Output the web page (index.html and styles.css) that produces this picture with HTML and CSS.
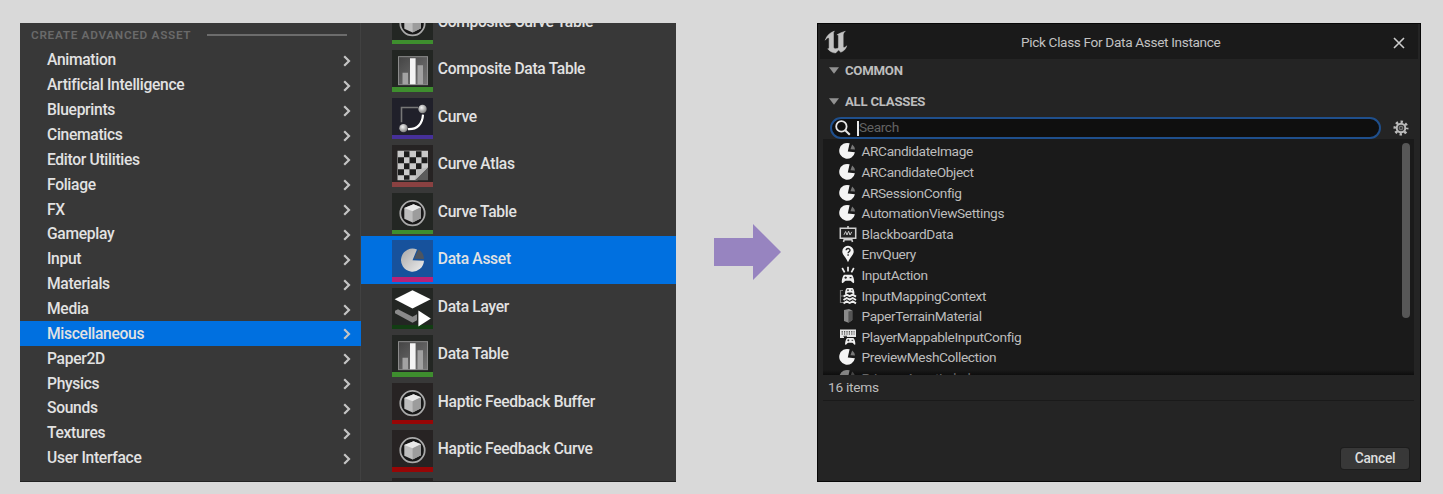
FILE: index.html
```
<!DOCTYPE html>
<html lang="en">
<head>
<meta charset="utf-8">
<title>Create Data Asset</title>
<link rel="stylesheet" href="styles.css">
</head>
<body>
<svg class="defs" width="0" height="0" aria-hidden="true">
  <defs>
    <linearGradient id="g-dark" x1="0" y1="0" x2="1" y2="1"><stop offset="0" stop-color="#444"/><stop offset="1" stop-color="#777"/></linearGradient>
    <linearGradient id="g-light" x1="0" y1="0" x2="1" y2="1"><stop offset="0" stop-color="#a8a8a8"/><stop offset="1" stop-color="#ededed"/></linearGradient>
    <radialGradient id="g-ball" cx=".4" cy=".35" r=".7"><stop offset="0" stop-color="#f4f4f4"/><stop offset="1" stop-color="#777"/></radialGradient>
    <symbol id="chev" viewBox="0 0 8 12"><path d="M1.2 1.2 6 6 1.2 10.8" fill="none" stroke="#c4c4c4" stroke-width="2.2"/></symbol>
    <symbol id="cube" viewBox="0 0 41 41">
      <circle cx="20.5" cy="20" r="12.2" fill="#171717" stroke="#a9a9a9" stroke-width="1.8"/>
      <path d="M12.3 14.8 21.5 11 29 14V25L20.6 29.4 12.3 25.6Z" fill="#bdbdbd"/>
      <path d="M12.3 14.8 21.5 11 29 14 20.6 18Z" fill="#e9e9e9"/>
      <path d="M20.6 18 29 14V25L20.6 29.4Z" fill="#9c9c9c"/>
    </symbol>
    <symbol id="bars" viewBox="0 0 41 41">
      <rect x="6.5" y="6.5" width="29" height="28" fill="url(#g-dark)" stroke="#8b8b8b"/>
      <path d="M10.5 22.5H16V34H10.5ZM25.5 15H31V34H25.5Z" fill="#a2a2a2"/>
      <path d="M18 8H23.6V34H18Z" fill="#f4f4f4"/>
    </symbol>
    <symbol id="curve" viewBox="0 0 41 41">
      <path d="M9.5 24V9.3H26" fill="none" stroke="#777" stroke-width="1.6"/>
      <path d="M16 31C25 31.5 30.5 26 31 16.5" fill="none" stroke="#fff" stroke-width="2.2"/>
      <circle cx="30.5" cy="10.8" r="4.2" fill="url(#g-ball)"/><circle cx="11.5" cy="30" r="4.2" fill="url(#g-ball)"/>
    </symbol>
    <symbol id="atlas" viewBox="0 0 41 41">
      <path d="M5.5 5.5H36V24L25.5 35H5.5Z" fill="#c9c9c9"/>
      <path d="M12 6h5.5v6H12zM24 6h5.5v6H24zM6 12h6v6H6zM17.5 12H24v6h-6.5zM29.5 12h6v6h-6zM12 18h5.5v6H12zM24 18h5.5v6H24zM6 24h6v6H6zM17.5 24H24v6h-6.5zM12 30h5.5v4.5H12z" fill="#1c1c1c"/>
      <path d="M36 22V35H22.5Z" fill="#5b5b5b"/><path d="M23 35 25 24.5 36 22" fill="#b9b9b9"/>
    </symbol>
    <symbol id="pie" viewBox="0 0 41 41">
      <path d="M20.5 20 25 9.4A11.5 11.5 0 1 0 32 20.6Z" fill="url(#g-light)"/>
      <path d="M22 18.6 26.4 9.4A11.3 11.3 0 0 1 32 18.9Z" fill="#4d5560"/>
    </symbol>
    <symbol id="layer" viewBox="0 0 41 41">
      <path d="M3 22.5 6 21 20.5 28.5 25 26.2V32L20.5 34.5 3 25.2Z" fill="#8a8a8a"/>
      <path d="M20.5 2 38.7 11 20.5 20.3 2.6 11Z" fill="#fff"/><path d="M26.4 22.3 38.8 30.3 26.4 38.3Z" fill="#fff"/>
    </symbol>
    <symbol id="s-pie" viewBox="0 0 18 18"><path d="M8.8 9.4 10.6 1.3A7.9 7.9 0 1 0 15.9 10.2Z" fill="#f4f4f4"/><path d="M11.4 7.2 13.2 2.4A7.2 7.2 0 0 1 16 7.6Z" fill="#777"/></symbol>
    <symbol id="s-board" viewBox="0 0 18 18"><path d="M1.3 3.3H16.7V13.2H1.3Z" fill="#222" stroke="#d0d0d0" stroke-width="1.5"/><path d="M9 1V3M5.5 13.5 4.5 17M12.5 13.5 13.5 17M5 14.7H13" stroke="#d0d0d0" stroke-width="1.6"/><path d="M5 9.8 6.6 6.5 8 10 9.6 6.2 11 10 12.8 6.8" fill="none" stroke="#c8c8c8"/></symbol>
    <symbol id="s-pin" viewBox="0 0 18 18"><path d="M9 .8A5.7 5.7 0 0 0 3.3 6.5C3.3 10 7 12 9 17.3 11 12 14.7 10 14.7 6.5A5.7 5.7 0 0 0 9 .8Z" fill="#f4f4f4"/><path d="M7.2 5.3C7.2 3 11 3 11 5.2 11 6.8 9.1 6.7 9.1 8.3M9.1 9.3V10.8" fill="none" stroke="#222" stroke-width="1.4"/></symbol>
    <symbol id="pad" viewBox="0 0 12 8"><path d="M3 .5H9C10.6 .5 12 7 11 7.7 10 8 9 5.6 8 5.6H4C3 5.6 2 8 1 7.7 0 7 1.4 .5 3 .5Z" fill="#eee"/><path d="M3 3H5M4 2V4M7.4 3H9" stroke="#222" stroke-width=".9"/></symbol>
    <symbol id="s-action" viewBox="0 0 18 18"><path d="M9 .8V5.6M3.2 2 5.6 6.4M14.8 2 12.4 6.4" stroke="#eee" stroke-width="1.7"/><use href="#pad" x="2" y="8" width="14" height="9.6"/></symbol>
    <symbol id="s-map" viewBox="0 0 18 18"><path d="M4 3.5H1.5V15.5H4M1.5 9H4" fill="none" stroke="#777" stroke-width="1.2"/><use href="#pad" x="5" y=".6" width="11.5" height="7"/><path d="M4.5 9.6 7.7 7.6 10.7 9.2 13.7 7.6 17 9.6M4.5 13 7.7 11 10.7 12.6 13.7 11 17 13M4.5 16.4 7.7 14.4 10.7 16 13.7 14.4 17 16.4" fill="none" stroke="#eee" stroke-width="1.9"/></symbol>
    <symbol id="s-slab" viewBox="0 0 18 18"><path d="M5 3 10 2 13.3 3.5V13L9.5 15.7 5 14Z" fill="#8b8b8b"/><path d="M9.4 4.6 13.3 3.5V13L9.4 15.7Z" fill="#555"/></symbol>
    <symbol id="s-keys" viewBox="0 0 18 18"><path d="M1 1.5H17V10H1Z" fill="#e8e8e8"/><path d="M2.6 3.8H15.5M2.6 6H15.5" stroke="#222" stroke-width="1.2" stroke-dasharray="1.2 1.2"/><path d="M4.5 8.3H8" stroke="#222"/><path d="M5 9H17.5V18H5Z" fill="#1a1a1a"/><use href="#pad" x="5.5" y="9.3" width="11.5" height="8"/></symbol>
  </defs>
</svg>
<main class="stage">
  <section class="menu">
    <div class="categories">
      <div class="heading"><span>CREATE ADVANCED ASSET</span><i class="rule"></i></div>
      <ul class="cat-list">
        <li>Animation<svg><use href="#chev"/></svg></li>
        <li>Artificial Intelligence<svg><use href="#chev"/></svg></li>
        <li>Blueprints<svg><use href="#chev"/></svg></li>
        <li>Cinematics<svg><use href="#chev"/></svg></li>
        <li>Editor Utilities<svg><use href="#chev"/></svg></li>
        <li>Foliage<svg><use href="#chev"/></svg></li>
        <li>FX<svg><use href="#chev"/></svg></li>
        <li>Gameplay<svg><use href="#chev"/></svg></li>
        <li>Input<svg><use href="#chev"/></svg></li>
        <li>Materials<svg><use href="#chev"/></svg></li>
        <li>Media<svg><use href="#chev"/></svg></li>
        <li class="selected">Miscellaneous<svg><use href="#chev"/></svg></li>
        <li>Paper2D<svg><use href="#chev"/></svg></li>
        <li>Physics<svg><use href="#chev"/></svg></li>
        <li>Sounds<svg><use href="#chev"/></svg></li>
        <li>Textures<svg><use href="#chev"/></svg></li>
        <li>User Interface<svg><use href="#chev"/></svg></li>
      </ul>
    </div>
    <ul class="assets">
      <li><svg class="tile green"><use href="#cube"/></svg><span>Composite Curve Table</span></li>
      <li><svg class="tile green"><use href="#bars"/></svg><span>Composite Data Table</span></li>
      <li><svg class="tile violet"><use href="#curve"/></svg><span>Curve</span></li>
      <li><svg class="tile brick"><use href="#atlas"/></svg><span>Curve Atlas</span></li>
      <li><svg class="tile green"><use href="#cube"/></svg><span>Curve Table</span></li>
      <li class="selected"><svg class="tile pink"><use href="#pie"/></svg><span>Data Asset</span></li>
      <li><svg class="tile forest"><use href="#layer"/></svg><span>Data Layer</span></li>
      <li><svg class="tile green"><use href="#bars"/></svg><span>Data Table</span></li>
      <li><svg class="tile red"><use href="#cube"/></svg><span>Haptic Feedback Buffer</span></li>
      <li><svg class="tile red"><use href="#cube"/></svg><span>Haptic Feedback Curve</span></li>
      <li><svg class="tile red"></svg></li>
    </ul>
  </section>

  <svg class="arrow" viewBox="0 0 67 56"><path d="M0 14H39V0L67 28 39 56V42H0Z" fill="#9784c0"/></svg>

  <section class="dialog">
    <header class="titlebar">
      <svg class="logo" viewBox="0 0 24 24"><path d="M1.2 10.2C2.6 5.8 5.8 2.6 10.4 1.1 9.6 2 9.5 2.8 9.5 4V17.3C10.5 19.3 13.2 19.2 14.4 17.6V6C14.4 5 13.8 4.6 12.9 4.8 15.5 3.2 18.2 2.2 21.3 1.2 20 2.4 19.2 3.4 19.2 5V16.6C19.2 18.1 20.9 17.8 22.8 15.8 22 19 19.4 21.5 16.8 22.2L14.6 20 11.6 23C8.4 22.9 5.5 21.2 3.7 18.8 4.5 18.9 5.1 18.5 5.1 17.5V8.8C5.1 6.8 3 7.6 1.2 10.2Z" fill="#c3c3c3" stroke="#c3c3c3" stroke-width=".5"/></svg>
      <h1>Pick Class For Data Asset Instance</h1>
      <svg class="close" viewBox="0 0 12 12"><path d="M1 1 11 11M11 1 1 11" stroke="#ccc" stroke-width="1.6"/></svg>
    </header>
    <div class="section"><svg class="tri" viewBox="0 0 10 7"><path d="M0 .3H10L5 6.7Z" fill="#929292"/></svg>COMMON</div>
    <div class="section second"><svg class="tri" viewBox="0 0 10 7"><path d="M0 .3H10L5 6.7Z" fill="#929292"/></svg>ALL CLASSES</div>
    <div class="searchrow">
      <div class="search">
        <svg class="lens" viewBox="0 0 16 16"><circle cx="6.4" cy="6.4" r="5.2" fill="none" stroke="#e6e6e6" stroke-width="1.8"/><path d="M10.2 10.2 14.8 14.8" stroke="#e6e6e6" stroke-width="2"/></svg>
        <i class="caret"></i><span>Search</span>
      </div>
      <svg class="gear" viewBox="0 0 16 16"><circle cx="8" cy="8" r="6.2" fill="none" stroke="#bbb" stroke-width="2.6" stroke-dasharray="2.4 2.469" stroke-dashoffset="1.2"/><circle cx="8" cy="8" r="4.3" fill="#333" stroke="#bbb" stroke-width="2"/><circle cx="8" cy="8" r="1.7" fill="none" stroke="#777" stroke-width="1.2"/></svg>
    </div>
    <div class="results">
      <ul class="classes">
        <li><svg><use href="#s-pie"/></svg>ARCandidateImage</li>
        <li><svg><use href="#s-pie"/></svg>ARCandidateObject</li>
        <li><svg><use href="#s-pie"/></svg>ARSessionConfig</li>
        <li><svg><use href="#s-pie"/></svg>AutomationViewSettings</li>
        <li><svg><use href="#s-board"/></svg>BlackboardData</li>
        <li><svg><use href="#s-pin"/></svg>EnvQuery</li>
        <li><svg><use href="#s-action"/></svg>InputAction</li>
        <li><svg><use href="#s-map"/></svg>InputMappingContext</li>
        <li><svg><use href="#s-slab"/></svg>PaperTerrainMaterial</li>
        <li><svg><use href="#s-keys"/></svg>PlayerMappableInputConfig</li>
        <li><svg><use href="#s-pie"/></svg>PreviewMeshCollection</li>
        <li class="fading"><svg><use href="#s-pie"/></svg>PrimaryAssetLabel</li>
      </ul>
      <i class="scrollbar"></i>
    </div>
    <div class="count">16 items</div>
    <footer class="actions"><button class="cancel">Cancel</button></footer>
  </section>
</main>
</body>
</html>
```
FILE: styles.css
```
* { box-sizing: border-box; }
body {
  margin: 0;
  background: #d9d9d9;
  font-family: Roboto, "Liberation Sans", sans-serif;
}
ul { list-style: none; margin: 0; padding: 0; }
svg { display: block; flex: none; }
.defs { position: absolute; }
.stage {
  display: flex;
  align-items: flex-start;
  width: 1443px;
  height: 494px;
  padding: 23px 0 0 20px;
  overflow: hidden;
}

/* Asset menu */
.menu {
  display: flex;
  width: 656.4px;
  height: 458.5px;
  overflow: hidden;
  background: #383838;
  border-bottom: 1px solid #222;
  color: #e2e2e2;
  font-size: 15.6px;
  font-weight: 500;
  letter-spacing: -.3px;
}
.categories { width: 340.5px; flex: none; border-right: 1px solid #414141; }
.heading {
  display: flex;
  align-items: center;
  height: 24px;
  margin-bottom: 1px;
  padding: 0 13px 0 11px;
  color: #6a6a6a;
  font-size: 11.8px;
  font-weight: 600;
  letter-spacing: .68px;
  white-space: nowrap;
}
.heading span { width: 175.5px; }
.rule { flex: 1; height: 1.5px; background: #6c6c6c; }
.cat-list li {
  display: flex;
  align-items: center;
  justify-content: space-between;
  height: 24.87px;
  padding: 0 9.5px 0 27px;
  margin-right: -1px;
}
.cat-list svg { width: 8px; height: 12px; margin-top: 1px; }
.selected { background: #0070e0; }
.assets { flex: 1; margin-top: -24.3px; }
.assets li {
  display: flex;
  height: 47.52px;
  padding: 4px 0 0 31.8px;
  gap: 4.5px;
}
.assets span { line-height: 39px; white-space: nowrap; }
.tile { width: 41px; height: 41.3px; }
.green { background: linear-gradient(#232623 37px, #3e8e2e 37px); }
.violet { background: linear-gradient(#20202a 37px, #46309a 37px); }
.brick { background: linear-gradient(#262323 37px, #8a4141 37px); }
.pink { background: linear-gradient(#17529c 37px, #b82277 37px); }
.forest { background: linear-gradient(#232623 37px, #123d13 37px); }
.red { background: linear-gradient(#272323 37px, #970606 37px); }

.arrow { width: 67px; height: 56px; margin: 201px 36.3px 0 37.3px; }

/* Class picker */
.dialog {
  display: flex;
  flex-direction: column;
  width: 604.5px;
  height: 459px;
  background: #242424;
  border: 1.5px solid #070707;
  color: #bdbdbd;
  font-size: 13.7px;
  letter-spacing: -.37px;
}
.titlebar {
  display: flex;
  align-items: center;
  justify-content: space-between;
  height: 35px;
  padding: 0 13px 0 4px;
  margin: 0 2px;
  background: #1a1a1a;
}
.titlebar h1 { margin: 1px 0 0; font-size: 13.6px; font-weight: 400; letter-spacing: -.33px; color: #c2c2c2; }
.logo { width: 24px; height: 24px; margin-top: 1px; }
.close { width: 12px; height: 12px; margin-top: 2px; }
.section {
  display: flex;
  align-items: center;
  gap: 6px;
  height: 23px;
  padding-left: 11px;
  font-size: 13.2px;
  font-weight: 700;
  letter-spacing: -.25px;
}
.second { height: 30px; margin: 4px 0 1px; }
.tri { width: 10px; height: 7px; }
.searchrow { display: flex; align-items: center; padding-left: 12px; height: 22px; gap: 12px; }
.search {
  display: flex;
  align-items: center;
  width: 551.5px;
  height: 22px;
  padding-left: 3px;
  border: 2px solid #1f4f8c;
  border-radius: 11px;
  background: #0f0f0f;
  color: #636363;
}
.lens { width: 16px; height: 16px; }
.caret { width: 1.5px; height: 15px; margin-left: 6.5px; background: #e8e8e8; }
.search span { margin-top: -2px; }
.gear { width: 16px; height: 16px; }
.results {
  display: flex;
  justify-content: space-between;
  height: 235.5px;
  margin: 0 6.5px 0 5px;
  padding: 2px 4px 0 16px;
  overflow: hidden;
  background: linear-gradient(transparent 231px, #0d0d0d), #1a1a1a;
}
.classes li { display: flex; align-items: center; gap: 4.5px; height: 20.62px; white-space: nowrap; }
.classes svg { width: 18px; height: 18px; }
.fading { opacity: .5; }
.scrollbar { width: 8px; height: 175px; margin-top: 2px; border-radius: 4px; background: #575757; }
.count {
  height: 26px;
  margin: 0 6px 0 5px;
  padding-left: 5px;
  line-height: 24px;
  letter-spacing: -.25px;
  border-bottom: 1px solid #1a1a1a;
}
.actions { display: flex; justify-content: flex-end; padding: 47.5px 11.5px 0 0; }
.cancel {
  width: 68px;
  height: 20.5px;
  padding: 0 0 1px;
  border: 0;
  border-radius: 3px;
  background: #383838;
  box-shadow: 0 0 0 1px #1d1d1d;
  color: #dedede;
  font: 500 13.8px Roboto, sans-serif;
  letter-spacing: -.3px;
}
```
